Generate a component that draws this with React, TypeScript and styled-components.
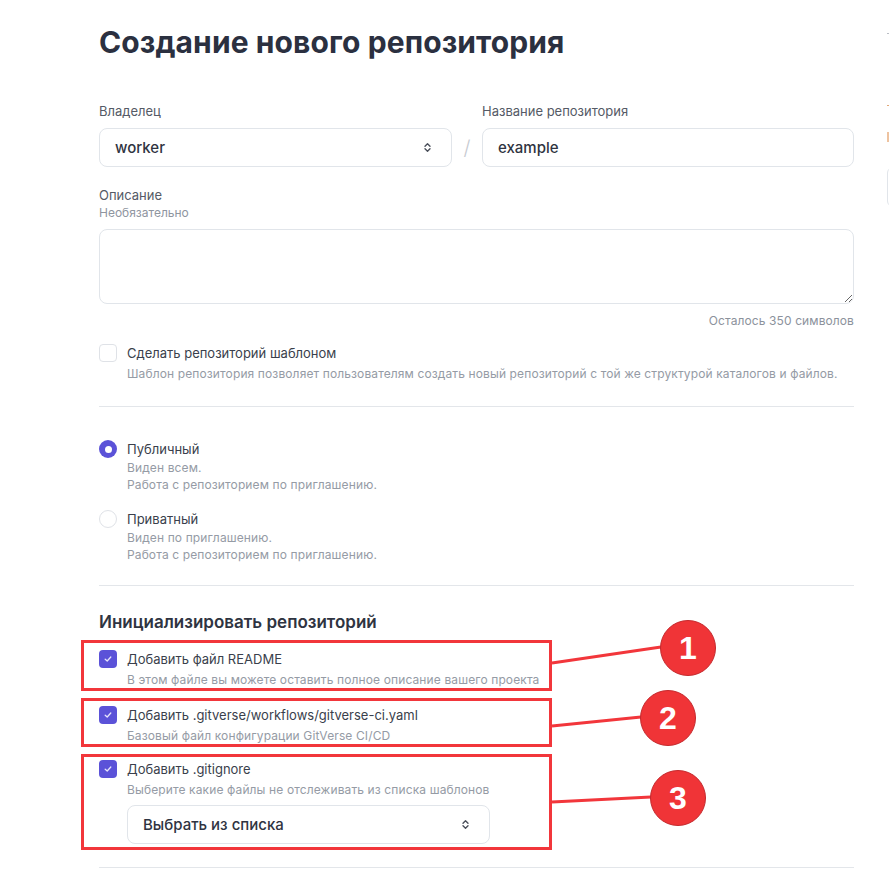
import React from "react";
import styled, { createGlobalStyle } from "styled-components";

const GlobalStyle = createGlobalStyle`
  html, body {
    margin: 0;
    padding: 0;
    background: #ffffff;
    overflow: hidden;
  }
  body {
    font-family: Inter, "Noto Sans", "Liberation Sans", sans-serif;
    color: #2c3140;
  }
  * {
    box-sizing: border-box;
  }
`;

const PURPLE = "#5b52d8";
const RED = "#f2363b";

const Page = styled.div`
  position: relative;
  display: flex;
  width: 889px;
  height: 874px;
  overflow: hidden;
`;

const Main = styled.main`
  flex-shrink: 0;
  width: 755px;
  margin-left: 99px;
  padding-top: 24px;
  display: flex;
  flex-direction: column;
`;

const Title = styled.h1`
  margin: 0;
  font-size: 30px;
  line-height: 36px;
  font-weight: 700;
  color: #2b3040;
  letter-spacing: 0.1px;
`;

const FieldRow = styled.div`
  display: grid;
  grid-template-columns: 353px 30px 1fr;
  align-items: end;
  margin-top: 43px;
`;

const Field = styled.div`
  display: flex;
  flex-direction: column;
  gap: 9px;
`;

const Label = styled.label`
  font-size: 13px;
  line-height: 16px;
  color: #555a66;
`;

const Hint = styled.div`
  margin-top: 2px;
  font-size: 12px;
  line-height: 15px;
  color: #8f959f;
`;

const Box = styled.div<{ $width?: number }>`
  display: flex;
  align-items: center;
  justify-content: space-between;
  height: 39px;
  width: ${(p) => (p.$width ? `${p.$width}px` : "100%")};
  padding: 0 20px 0 15px;
  border: 1px solid #e1e5ea;
  border-radius: 8px;
  font-size: 15px;
  font-weight: 500;
  color: #2f3441;
  background: #fff;
`;

const Slash = styled.div`
  height: 39px;
  display: flex;
  align-items: center;
  justify-content: center;
  font-size: 20px;
  font-weight: 300;
  color: #c6cad1;
`;

const DescBlock = styled.div`
  display: flex;
  flex-direction: column;
  margin-top: 20px;
`;

const TextArea = styled.textarea`
  margin-top: 9px;
  width: 100%;
  height: 75px;
  border: 1px solid #e1e5ea;
  border-radius: 8px;
  resize: vertical;
  font-family: inherit;
  outline: none;
`;

const Counter = styled.div`
  margin-top: 9px;
  align-self: flex-end;
  font-size: 12px;
  line-height: 15px;
  color: #8c929c;
  letter-spacing: 0.1px;
`;

const Option = styled.div<{ $mt: number }>`
  display: grid;
  grid-template-columns: 18px 1fr;
  column-gap: 10px;
  margin-top: ${(p) => p.$mt}px;
`;

const OptionText = styled.div`
  display: flex;
  flex-direction: column;
`;

const OptionLabel = styled.div`
  font-size: 13px;
  line-height: 18px;
  color: #3a3f4c;
`;

const OptionDesc = styled.div<{ $lh?: number; $mt?: number }>`
  margin-top: ${(p) => p.$mt ?? 4}px;
  font-size: 12px;
  line-height: ${(p) => p.$lh ?? 15}px;
  letter-spacing: 0.12px;
  color: #959ba5;
`;

const Check = styled.div<{ $on?: boolean }>`
  width: 18px;
  height: 18px;
  border-radius: 4px;
  display: flex;
  align-items: center;
  justify-content: center;
  background: ${(p) => (p.$on ? PURPLE : "#fff")};
  border: ${(p) => (p.$on ? "none" : "1.5px solid #dfe2e7")};
`;

const Radio = styled.div<{ $on?: boolean }>`
  width: 18px;
  height: 18px;
  border-radius: 50%;
  display: flex;
  align-items: center;
  justify-content: center;
  background: ${(p) => (p.$on ? PURPLE : "#fff")};
  border: ${(p) => (p.$on ? "none" : "1.5px solid #dfe2e7")};
  &::after {
    content: "";
    display: ${(p) => (p.$on ? "block" : "none")};
    width: 7px;
    height: 7px;
    border-radius: 50%;
    background: #fff;
  }
`;

const Divider = styled.hr<{ $mt: number }>`
  margin: ${(p) => p.$mt}px 0 0;
  border: none;
  height: 1px;
  background: #e3e6ea;
  width: 100%;
`;

const Heading = styled.h2`
  margin: 25px 0 0;
  font-size: 17px;
  line-height: 22px;
  font-weight: 600;
  color: #2f3441;
`;

const SubSelect = styled.div`
  margin: 8px 0 0 28px;
`;

/* right sidebar, only its left edge is inside the window */
const Aside = styled.aside`
  flex-shrink: 0;
  width: 200px;
  margin-left: 33px;
  padding-top: 33px;
  display: flex;
  flex-direction: column;
  align-items: flex-start;
`;

const Mark = styled.span<{ $color: string; $mt: number; $h: number; $w?: number }>`
  display: block;
  margin-top: ${(p) => p.$mt}px;
  width: ${(p) => p.$w ?? 3}px;
  height: ${(p) => p.$h}px;
  background: ${(p) => p.$color};
`;

const SideBox = styled.div`
  margin-top: 25px;
  width: 100%;
  height: 40px;
  border: 1px solid #e1e5ea;
  border-radius: 6px;
`;

/* annotation layer drawn over the form */
const Overlay = styled.div`
  position: absolute;
  inset: 0;
  pointer-events: none;
`;

const Frame = styled.div<{ $top: number; $height: number }>`
  position: absolute;
  left: 81px;
  width: 471px;
  top: ${(p) => p.$top}px;
  height: ${(p) => p.$height}px;
  border: 3px solid ${RED};
`;

const Badge = styled.div<{ $x: number; $y: number }>`
  position: absolute;
  left: ${(p) => p.$x - 28}px;
  top: ${(p) => p.$y - 28}px;
  width: 56px;
  height: 56px;
  border-radius: 50%;
  background: #f03437;
  border: 1px solid #c4292d;
  display: flex;
  align-items: center;
  justify-content: center;
  color: #fff;
  font-family: "Liberation Sans", Arial, sans-serif;
  font-weight: 700;
  font-size: 32px;
`;

const Lines = styled.svg`
  position: absolute;
  left: 0;
  top: 0;
`;

const Chevrons = () => (
  <svg width="7" height="11" viewBox="0 0 7 11" fill="none">
    <path d="M1 4.2 L3.5 1.7 L6 4.2" stroke="#4a4f5a" strokeWidth="1.4" strokeLinecap="round" strokeLinejoin="round" />
    <path d="M1 6.8 L3.5 9.3 L6 6.8" stroke="#4a4f5a" strokeWidth="1.4" strokeLinecap="round" strokeLinejoin="round" />
  </svg>
);

const Tick = () => (
  <svg width="10" height="10" viewBox="0 0 10 10" fill="none">
    <path d="M2.2 5.2 L4.2 7 L7.8 3" stroke="#e6e4fb" strokeWidth="1.3" strokeLinecap="round" strokeLinejoin="round" />
  </svg>
);

const inits = [
  {
    label: "Добавить файл README",
    desc: "В этом файле вы можете оставить полное описание вашего проекта",
    mt: 17,
  },
  {
    label: "Добавить .gitverse/workflows/gitverse-ci.yaml",
    desc: "Базовый файл конфигурации GitVerse CI/CD",
    mt: 19,
  },
  {
    label: "Добавить .gitignore",
    desc: "Выберите какие файлы не отслеживать из списка шаблонов",
    mt: 17,
  },
];

const notes = [
  { n: 1, top: 640, height: 51, x: 688, y: 648, from: 663 },
  { n: 2, top: 698, height: 49, x: 668, y: 718, from: 726 },
  { n: 3, top: 754, height: 96, x: 678, y: 798, from: 802 },
];

const App: React.FC = () => {
  return (
    <Page>
      <GlobalStyle />
      <Main>
        <Title>Создание нового репозитория</Title>

        <FieldRow>
          <Field>
            <Label>Владелец</Label>
            <Box>
              worker
              <Chevrons />
            </Box>
          </Field>
          <Slash>/</Slash>
          <Field>
            <Label>Название репозитория</Label>
            <Box>example</Box>
          </Field>
        </FieldRow>

        <DescBlock>
          <Label>Описание</Label>
          <Hint>Необязательно</Hint>
          <TextArea />
          <Counter>Осталось 350 символов</Counter>
        </DescBlock>

        <Option $mt={16}>
          <Check />
          <OptionText>
            <OptionLabel>Сделать репозиторий шаблоном</OptionLabel>
            <OptionDesc>
              Шаблон репозитория позволяет пользователям создать новый репозиторий с той же структурой каталогов и файлов.
            </OptionDesc>
          </OptionText>
        </Option>

        <Divider $mt={25} />

        <Option $mt={33}>
          <Radio $on />
          <OptionText>
            <OptionLabel>Публичный</OptionLabel>
            <OptionDesc $lh={17} $mt={1}>
              Виден всем.
              <br />
              Работа с репозиторием по приглашению.
            </OptionDesc>
          </OptionText>
        </Option>
        <Option $mt={17}>
          <Radio />
          <OptionText>
            <OptionLabel>Приватный</OptionLabel>
            <OptionDesc $lh={17} $mt={1}>
              Виден по приглашению.
              <br />
              Работа с репозиторием по приглашению.
            </OptionDesc>
          </OptionText>
        </Option>

        <Divider $mt={22} />

        <Heading>Инициализировать репозиторий</Heading>

        {inits.map((item, i) => (
          <Option $mt={item.mt} key={i}>
            <Check $on>
              <Tick />
            </Check>
            <OptionText>
              <OptionLabel>{item.label}</OptionLabel>
              <OptionDesc>{item.desc}</OptionDesc>
            </OptionText>
          </Option>
        ))}

        <SubSelect>
          <Box $width={363}>
            Выбрать из списка
            <Chevrons />
          </Box>
        </SubSelect>

        <Divider $mt={23} />
      </Main>

      <Aside>
        <Mark $color="#b9bdc4" $mt={0} $h={1} $w={2} />
        <Mark $color="#e2a878" $mt={71} $h={1} />
        <Mark $color="#eec3a0" $mt={26} $h={10} />
        <SideBox />
      </Aside>

      <Overlay>
        <Lines width="889" height="874">
          {notes.map((a) => (
            <line
              key={a.n}
              x1={552}
              y1={a.from}
              x2={a.x - 27}
              y2={a.y - 1}
              stroke={RED}
              strokeWidth={3}
            />
          ))}
        </Lines>
        {notes.map((a) => (
          <Frame key={`f${a.n}`} $top={a.top} $height={a.height} />
        ))}
        {notes.map((a) => (
          <Badge key={`b${a.n}`} $x={a.x} $y={a.y}>
            {a.n}
          </Badge>
        ))}
      </Overlay>
    </Page>
  );
};

export default App;
